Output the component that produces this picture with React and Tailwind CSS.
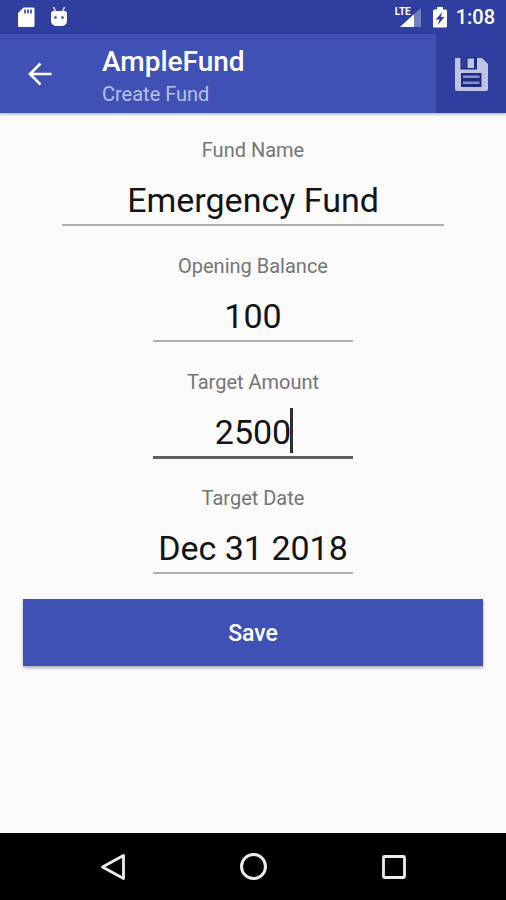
import { useState } from "react";

const StatusBar = () => (
  <div className="flex h-[34px] items-center justify-between bg-[#303f9f] pr-[11px] pl-[17px] text-white">
    <div className="flex items-center gap-[14px]">
      {/* SD card */}
      <svg className="h-[21px] w-[18px]" viewBox="0 0 18 21" fill="none">
        <path
          d="M6.500 0.500h9.500a1.500 1.500 0 0 1 1.500 1.500v16.500A1.500 1.500 0 0 1 16 20H2.500a1.500 1.500 0 0 1-1.500-1.500V6z"
          fill="currentColor"
        />
        <path d="M8 2.500v4M11 2.500v4M14 2.500v4" stroke="#303f9f" strokeWidth="1.600" />
      </svg>
      {/* Debug bridge */}
      <svg className="h-[21px] w-[20px]" viewBox="0 0 20 21" fill="none">
        <path d="M4.500 0l2 4.500M15.500 0l-2 4.500" stroke="#c3c9ee" strokeWidth="1.800" />
        <path
          d="M4.500 4h11a2.500 2.500 0 0 1 2.500 2.500V14a5 5 0 0 1-5 5H7a5 5 0 0 1-5-5V6.500A2.500 2.500 0 0 1 4.500 4z"
          fill="currentColor"
        />
        <circle cx="6.500" cy="10.500" r="1.300" fill="#303f9f" />
        <circle cx="13.500" cy="10.500" r="1.300" fill="#303f9f" />
      </svg>
    </div>
    <div className="flex items-center">
      <div className="relative h-[21px] w-[26px]">
        <svg className="h-full w-full" viewBox="0 0 26 21">
          <path d="M26 1v19H5z" fill="#7680c1" />
          <path d="M19 7.300V20H5z" fill="currentColor" />
        </svg>
        <span className="absolute top-0 left-0 bg-[#303f9f] text-[10px] leading-[10px] font-bold">
          LTE
        </span>
      </div>
      <svg className="ml-3 h-[21px] w-[14px]" viewBox="0 0 14 21">
        <path
          d="M4 0h6v2.500h2.500A1.500 1.500 0 0 1 14 4v15a1.500 1.500 0 0 1-1.500 1.500h-11A1.500 1.500 0 0 1 0 19V4a1.500 1.500 0 0 1 1.500-1.500H4z"
          fill="currentColor"
        />
        <path d="M9.500 5L2.500 12.500h4L4.800 18l6.700-8H7.700z" fill="#303f9f" />
      </svg>
      <span className="ml-[9px] text-[20px] leading-6 font-medium">1:08</span>
    </div>
  </div>
);

const AppBar = () => (
  <header className="relative flex h-[79px] bg-[#3f51b5] text-white shadow-[0_1px_3px_rgba(0,0,0,0.35)]">
    <button
      type="button"
      aria-label="Back"
      className="flex w-[80px] items-center justify-center"
    >
      <svg className="size-6" viewBox="0 0 24 24" fill="none">
        <path
          d="M23.500 12H2.500M12.500 1.500L2 12l10.500 10.500"
          stroke="currentColor"
          strokeWidth="2.600"
        />
      </svg>
    </button>
    <div className="flex flex-1 flex-col justify-center pt-1 pl-[22px]">
      <h1 className="text-[28px] leading-8 font-medium">AmpleFund</h1>
      <p className="pt-1 text-[20px] leading-6 text-[#b9c0e6]">Create Fund</p>
    </div>
    <button
      type="button"
      aria-label="Save fund"
      className="flex w-[70px] items-center justify-center bg-[#303f9f]"
    >
      <svg className="size-[34px]" viewBox="0 0 34 34">
        <path
          d="M2 1h26l6 6v25a2 2 0 0 1-2 2H3a2 2 0 0 1-2-2V2a1 1 0 0 1 1-1z"
          fill="#bfc4e2"
        />
        {/* Shutter */}
        <path d="M6.500 0H23v12.500H6.500z" fill="#1d2b85" />
        <path d="M7.500 0h5v11h-5z" fill="#303f9f" />
        <path d="M13.500 1.500h6.500v9.500h-6.500z" fill="#bfc4e2" />
        {/* Label */}
        <path d="M7 16h20.500v14H7z" fill="#1d2b85" />
        <path d="M9 18.500h16.500v2.500H9zM9 24.500h16.500v2.500H9z" fill="#8a93c9" />
      </svg>
    </button>
  </header>
);

const Field = ({ id, label, value, onChange, wide, active }) => (
  <div
    className={`flex h-[116px] flex-col items-center ${wide ? "w-full px-[39px]" : "w-[200px]"}`}
  >
    <label htmlFor={id} className="text-[20px] leading-6 text-[#757575]">
      {label}
    </label>
    <div className="relative mt-3 w-full">
      <input
        id={id}
        type="text"
        value={value}
        onChange={(e) => onChange(id, e.target.value)}
        className={`block w-full bg-transparent pt-0.5 text-center text-[34px] leading-[48px] text-[#141414] outline-none ${
          active
            ? "border-b-3 border-[#5f5f5f]"
            : "border-b-2 border-[#b0b0b0]"
        }`}
      />
      {active && (
        <span className="absolute top-0.5 left-1/2 ml-[37px] h-[45px] w-[3px] bg-[#2e2e2e]" />
      )}
    </div>
  </div>
);

const NavigationBar = () => (
  <nav className="flex h-[67px] items-center justify-center gap-[101px] bg-black text-[#ececec]">
    <button type="button" aria-label="Back" className="flex size-10 items-center justify-center">
      <svg className="size-7" viewBox="0 0 28 28" fill="none">
        <path
          d="M25.500 2.500v23L4.500 14z"
          stroke="currentColor"
          strokeWidth="2.800"
          strokeLinejoin="round"
        />
      </svg>
    </button>
    <button type="button" aria-label="Home" className="flex size-10 items-center justify-center">
      <svg className="size-7" viewBox="0 0 28 28" fill="none">
        <circle cx="14.500" cy="13.500" r="12" stroke="currentColor" strokeWidth="3" />
      </svg>
    </button>
    <button type="button" aria-label="Recents" className="flex size-10 items-center justify-center">
      <svg className="size-7" viewBox="0 0 28 28" fill="none">
        <rect
          x="3.500"
          y="3.500"
          width="21"
          height="21"
          rx="1"
          stroke="currentColor"
          strokeWidth="2.800"
        />
      </svg>
    </button>
  </nav>
);

export default function App() {
  const [form, setForm] = useState({
    fundName: "Emergency Fund",
    openingBalance: "100",
    targetAmount: "2500",
    targetDate: "Dec 31 2018",
  });

  const handleChange = (id, value) => setForm({ ...form, [id]: value });

  return (
    <div className="flex min-h-screen flex-col bg-[#fafafa] font-[Roboto,sans-serif]">
      <StatusBar />
      <AppBar />
      <main className="flex-1 px-[23px] pt-[25px]">
        <form
          className="flex flex-col items-center"
          onSubmit={(e) => e.preventDefault()}
        >
          <Field
            id="fundName"
            label="Fund Name"
            value={form.fundName}
            onChange={handleChange}
            wide
          />
          <Field
            id="openingBalance"
            label="Opening Balance"
            value={form.openingBalance}
            onChange={handleChange}
          />
          <Field
            id="targetAmount"
            label="Target Amount"
            value={form.targetAmount}
            onChange={handleChange}
            active
          />
          <Field
            id="targetDate"
            label="Target Date"
            value={form.targetDate}
            onChange={handleChange}
          />
          <button
            type="submit"
            className="-mt-[3px] h-[67px] w-full bg-[#3f51b5] pt-1 text-[23px] font-medium text-white shadow-[0_2px_3px_rgba(0,0,0,0.3)]"
          >
            Save
          </button>
        </form>
      </main>
      <NavigationBar />
    </div>
  );
}
